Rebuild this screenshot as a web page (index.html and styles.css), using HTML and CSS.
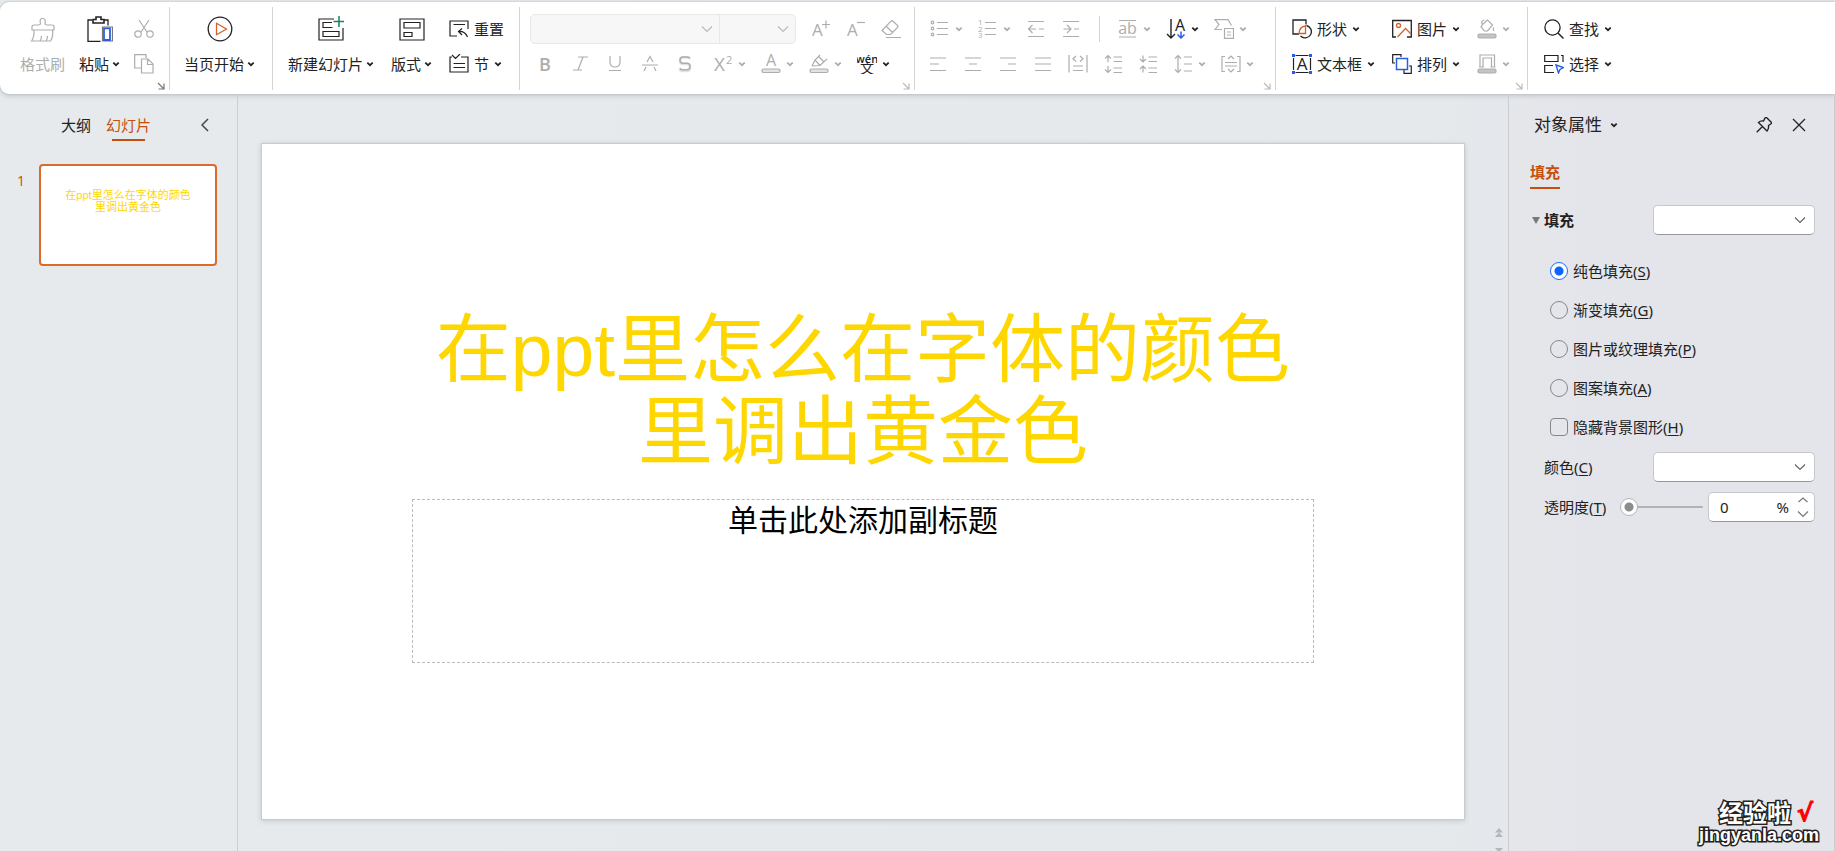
FILE: index.html
```html
<!DOCTYPE html>
<html lang="zh-CN">
<head>
<meta charset="utf-8">
<meta name="viewport" content="width=device-width, initial-scale=1">
<title>演示文稿</title>
<link rel="stylesheet" href="styles.css">
</head>
<body>
<svg class="sprite" aria-hidden="true">
  <symbol id="chev" viewBox="0 0 8 8"><path d="M1.3 2.6 4 5.2 6.7 2.6" stroke-width="1.8"/></symbol>
  <symbol id="launch" viewBox="0 0 8 8"><path d="M1 1 6.5 6.5M1.5 7H7V1.5" stroke-width="1.2"/></symbol>
  <symbol id="brush" viewBox="0 0 26 26"><path d="M2 14V10.500Q2 9 4 9H8.500Q10.500 9 10.500 7.500C8 .5 17 .5 15 7.500Q15 9 17 9H21.500Q24 9 24 10.500V14ZM4 14Q4.500 21 1.500 25H20.500Q23.500 21 22.500 14M10 25Q11.500 23 11.500 20M16 25Q17.500 23 17.500 20"/></symbol>
  <symbol id="paste" viewBox="0 0 26 26"><path d="M5 4H1V25.300H13.500M17 4H21V9.500" stroke-width="1.300"/><path d="M6 7V3.500H9V1H14V3.500H17V7Z" stroke-width="1.600"/><path d="M15.500 11H25.500V25H15.500Z" stroke="#777"/><path d="M17 12.300H23V24H17Z" stroke="#2b5fe3" stroke-width="1.800"/></symbol>
  <symbol id="cut" viewBox="0 0 20 20"><path d="M5 1 13 13M15 1 7 13"/><circle cx="4" cy="15" r="3.200"/><circle cx="16" cy="15" r="3.200"/></symbol>
  <symbol id="copy" viewBox="0 0 20 20"><path d="M7 14H.7V.7H12V4M7.500 5H14L19 10V19H7.500ZM13.500 5V10.500H19"/></symbol>
  <symbol id="play" viewBox="0 0 26 26"><circle cx="13" cy="13" r="11.800" stroke-width="1.300"/><path d="M9.500 7.300 19.500 13 9.500 18.700Z" stroke="#d0622f" stroke-width="1.300"/></symbol>
  <symbol id="newslide" viewBox="0 0 26 26"><path d="M16 3H1V24H25V12M14 6.500H5V11.500H14.500M5 15.500H21V20.500H5Z"/><path d="M21 0V11M15.500 5.500H26.500" stroke="#168461" stroke-width="1.500"/></symbol>
  <symbol id="layout" viewBox="0 0 26 26"><path d="M1 3H25V24H1ZM5 6.500H21V12H5ZM5 16.500H13V20.500H5Z"/></symbol>
  <symbol id="reset" viewBox="0 0 20 20"><path d="M8 17H1V2H19V10M4.500 5.500H16M13 9.500 9.500 12.500 13 16M9.500 12.500Q16 12 18.500 18"/></symbol>
  <symbol id="section" viewBox="0 0 20 20"><path d="M3 3H1V18H19V3H12M3 1 6.500 4.500 11 0M4.500 9.500H16M4.500 13.500H16"/></symbol>
  <symbol id="grow" viewBox="0 0 20 20"><text x="1" y="17" class="g17">A</text><path d="M11 5.500H19M15 1.500V9.500"/></symbol>
  <symbol id="shrink" viewBox="0 0 20 20"><text x="1" y="17" class="g17">A</text><path d="M11 3.500H19"/></symbol>
  <symbol id="eraser" viewBox="0 0 20 20"><path d="M1 11.500 10 2.200Q11 1.300 12 2.200L16.500 6.500Q17.500 7.500 16.500 8.500L9.500 15.500H5.500L1 11.500ZM5.500 7.500 12 14M5 18.500H20"/></symbol>
  <symbol id="bold" viewBox="0 0 20 20"><text x="4" y="17" class="g18 heavy">B</text></symbol>
  <symbol id="italic" viewBox="0 0 20 20"><path d="M8 3H18M3 16H12M13 3 8 16"/></symbol>
  <symbol id="under" viewBox="0 0 20 20"><path d="M5 2V8.500Q5.500 13 10 13 14.500 13 15 8.500V2M4 16.500H16"/></symbol>
  <symbol id="strike" viewBox="0 0 20 20"><path d="M2 11H18M7 8 10 2.500 13 8M4 17 6 13M16 17 14 13"/></symbol>
  <symbol id="shadow" viewBox="0 0 20 20"><path d="M14.500 5Q14 3.500 12 3.500H8Q5 3.500 5 6.500 5 10 8 10H12Q15 10 15 13.500 15 17 12 17H7.500Q5 17 4.500 15" stroke-width="2.500" opacity=".35"/><path d="M15 4.500Q14.500 3 12.500 3H8Q5 3 5 6 5 9.300 8 9.300H12Q15 9.300 15 12.500 15 15.800 12 15.800H7.500Q5.500 15.800 5 14" stroke-width="1.500"/></symbol>
  <symbol id="super" viewBox="0 0 20 20"><text x="1" y="17" class="g19">X</text><text x="13" y="10" class="g11">2</text></symbol>
  <symbol id="fcolor" viewBox="0 0 20 20"><text x="5" y="12" class="g16">A</text><rect x="1" y="15" width="18" height="3.500" rx="1.500" fill="#e2e2e2"/></symbol>
  <symbol id="hilite" viewBox="0 0 20 20"><path d="M3 12 6 6 11 1M3 12 11 11.500 18 5M6 6 11 11.500M10 3 15 8"/><rect x="1" y="15" width="18" height="3.500" rx="1.500" fill="#e2e2e2"/></symbol>
  <symbol id="wen" viewBox="0 0 20 20"><text x="10" y="9" class="g11 mid heavy">wén</text><text x="10" y="19" class="g14 mid">文</text></symbol>
  <symbol id="bullets" viewBox="0 0 20 20"><path d="M7 3.500H18M7 9.500H18M7 15.500H18"/><circle cx="2.500" cy="3.500" r="1.300"/><circle cx="2.500" cy="9.500" r="1.300"/><circle cx="2.500" cy="15.500" r="1.300"/></symbol>
  <symbol id="numbers" viewBox="0 0 20 20"><path d="M7 3.500H18M7 9.500H18M7 15.500H18"/><text x="0" y="6" class="g8">1</text><text x="0" y="12.500" class="g8">2</text><text x="0" y="19" class="g8">3</text></symbol>
  <symbol id="outdent" viewBox="0 0 20 20"><path d="M2 2.500H18M2 17.500H18M2.500 10H10M6.500 6 2.500 10 6.500 14M13 10H18"/></symbol>
  <symbol id="indent" viewBox="0 0 20 20"><path d="M2 2.500H18M2 17.500H18M2.500 10H10M6 6 10 10 6 14M13 10H18"/></symbol>
  <symbol id="ab" viewBox="0 0 20 20"><path d="M1 1.500H18M1 18H18"/><text x="9.500" y="15" class="g16 mid">ab</text></symbol>
  <symbol id="dir" viewBox="0 0 20 20"><path d="M5 0V19M1 15 5 19 9 15" stroke-width="1.400"/><text x="9" y="12" class="g16">A</text><path d="M15 12.500V19M11.500 15.500 15 19 18.500 15.500" stroke="#2b5fe3" stroke-width="1.500"/></symbol>
  <symbol id="smart" viewBox="0 0 20 20"><path d="M8 10.500H1L5 5.500 1 .7H14L17.500 6.500M10.500 9.500H19.500V19.300H10.500ZM13 13H17M13 16H17"/></symbol>
  <symbol id="al" viewBox="0 0 20 20"><path d="M2 4H18M2 10H11M2 16.500H18"/></symbol>
  <symbol id="ac" viewBox="0 0 20 20"><path d="M2 4H18M6 10H14M2 16.500H18"/></symbol>
  <symbol id="ar" viewBox="0 0 20 20"><path d="M2 4H18M10 10H18M2 16.500H18"/></symbol>
  <symbol id="aj" viewBox="0 0 20 20"><path d="M2 4H18M2 10H18M2 16.500H18"/></symbol>
  <symbol id="dist" viewBox="0 0 20 20"><path d="M1 1V18.500M19 1V18.500M5 12H15M5 16.500H15M8 2 5 4.700 8 7.500M12 2 15 4.700 12 7.500"/></symbol>
  <symbol id="spup" viewBox="0 0 20 20"><path d="M5 8V1.500M2 4.500 5 1.500 8 4.500M5 12V18.500M2 15.500 5 18.500 8 15.500M10.500 3H19M10.500 7.500H19M10.500 14H19M10.500 18.500H19"/></symbol>
  <symbol id="spdn" viewBox="0 0 20 20"><path d="M5 8V1.500M2 5 5 8 8 5M5 12V18.500M2 15 5 12 8 15M10.500 3H19M10.500 7.500H19M10.500 14H19M10.500 18.500H19"/></symbol>
  <symbol id="line" viewBox="0 0 20 20"><path d="M5 1.500V18.500M2 4.500 5 1.500 8 4.500M2 15.500 5 18.500 8 15.500M11 3H19M11 10H19M11 17H19"/></symbol>
  <symbol id="valign" viewBox="0 0 20 20"><path d="M4 2.500H1V17.500H4M16 2.500H19V17.500H16M4 8.500H16M4 12H16M7 5 10 2 13 5M7 15 10 18 13 15"/></symbol>
  <symbol id="shapes" viewBox="0 0 20 20"><path d="M7 15H1V1H14V5.500M8.500 17A6.300 6.300 0 1 0 14.500 6.500" stroke-width="1.300"/><path d="M7 14.500Q7.500 7.500 13.500 7V14.500Z" stroke="#d0622f" stroke-width="1.300"/></symbol>
  <symbol id="textbox" viewBox="0 0 20 20"><path d="M3.500 1.500H16.500M3.500 18.500H16.500M1.500 4V16M18.500 4V16"/><text x="10" y="16" class="g17 mid">A</text><path d="M0 0H3V3H0ZM17 0H20V3H17ZM0 17H3V20H0ZM17 17H20V20H17Z" fill="#2b5fe3" stroke="none"/></symbol>
  <symbol id="picture" viewBox="0 0 20 20"><path d="M4 18H.7V1.500H19.300V18H15" stroke-width="1.300"/><circle cx="6.500" cy="6.500" r="2" stroke="#d0622f" stroke-width="1.300"/><path d="M5.500 18 13.500 9.500 19 15" stroke="#d0622f" stroke-width="1.300"/></symbol>
  <symbol id="arrange" viewBox="0 0 20 20"><path d="M3 9H.7V.7H9V3M17 12H19.300V19.300H12V16"/><path d="M4.500 4.500H15.500V15.500H4.500Z" stroke="#2b5fe3" stroke-width="1.500"/></symbol>
  <symbol id="bucket" viewBox="0 0 20 20"><path d="M5.500 5.500 10.500 1 15.500 6 10.500 12H7.500L4 8ZM5 5Q4 1.500 7.500 1M16.500 8.500V12"/><rect x="1" y="15" width="18" height="4" rx="1.500" fill="#c4c4c4"/></symbol>
  <symbol id="outline" viewBox="0 0 20 20"><path d="M3 13V1H17.500V13M6 13V4H14.500V13M2 13H7M13.500 13H18.500"/><rect x="1" y="15" width="18" height="4" rx="1.500" fill="#c4c4c4"/></symbol>
  <symbol id="search" viewBox="0 0 20 20"><circle cx="8.500" cy="8.500" r="7.600" stroke-width="1.300"/><path d="M14 14 19.500 19.500" stroke-width="1.500"/></symbol>
  <symbol id="select" viewBox="0 0 20 20"><path d="M.7 1.500H14V7.500H.7ZM9 11.500H.7V18.500H10M17 1.500H19V8" stroke-width="1.200"/><path d="M12 11 19.500 13.500 16 15.500 14.500 19Z" stroke="#2b5fe3" stroke-width="1.400"/></symbol>
  <symbol id="back" viewBox="0 0 8 14"><path d="M7 1 1 7 7 13" stroke-width="1.500"/></symbol>
  <symbol id="pin" viewBox="0 0 16 16"><path d="M9 1Q10 .2 11 1L15 5Q16 6 15 6.800L12.500 8.500Q13 12 11 14L2.500 5.500Q4.500 3.500 7.500 4ZM6 10 .7 15.300" stroke-width="1.400"/></symbol>
  <symbol id="close" viewBox="0 0 14 14"><path d="M1 1 13 13M13 1 1 13" stroke-width="1.300"/></symbol>
  <symbol id="down" viewBox="0 0 12 8"><path d="M1 1.500 6 6.500 11 1.500" stroke-width="1.200"/></symbol>
  <symbol id="up" viewBox="0 0 12 8"><path d="M1.500 6 6 2 10.500 6" stroke-width="1.200"/></symbol>
</svg>

<header class="ribbon" role="toolbar" aria-label="开始">
  <section class="group group-clip">
    <button class="big off" disabled><svg class="i26"><use href="#brush"/></svg><span>格式刷</span></button>
    <button class="big"><svg class="i26"><use href="#paste"/></svg><span class="cap">粘贴<svg class="chev"><use href="#chev"/></svg></span></button>
    <div class="stack">
      <button class="tool off" disabled aria-label="剪切"><svg class="i20"><use href="#cut"/></svg></button>
      <button class="tool off" disabled aria-label="复制"><svg class="i20"><use href="#copy"/></svg></button>
    </div>
    <button class="launcher" aria-label="剪贴板选项"><svg class="chev"><use href="#launch"/></svg></button>
  </section>
  <section class="group group-play">
    <button class="big"><svg class="i26"><use href="#play"/></svg><span class="cap">当页开始<svg class="chev"><use href="#chev"/></svg></span></button>
  </section>
  <section class="group group-slide">
    <button class="big"><svg class="i26"><use href="#newslide"/></svg><span class="cap">新建幻灯片<svg class="chev"><use href="#chev"/></svg></span></button>
    <button class="big"><svg class="i26"><use href="#layout"/></svg><span class="cap">版式<svg class="chev"><use href="#chev"/></svg></span></button>
    <div class="stack">
      <button class="tool"><svg class="i20"><use href="#reset"/></svg>重置</button>
      <button class="tool"><svg class="i20"><use href="#section"/></svg><span class="cap wide">节<svg class="chev"><use href="#chev"/></svg></span></button>
    </div>
  </section>
  <section class="group group-font">
    <div class="stack">
      <div class="row">
        <div class="combo">
          <span class="pick font-name"><select disabled aria-label="字体"><option></option></select><svg class="arrow"><use href="#down"/></svg></span>
          <span class="pick font-size"><select disabled aria-label="字号"><option></option></select><svg class="arrow"><use href="#down"/></svg></span>
        </div>
        <button class="tool off" disabled aria-label="增大字号"><svg class="i20"><use href="#grow"/></svg></button>
        <button class="tool off" disabled aria-label="减小字号"><svg class="i20"><use href="#shrink"/></svg></button>
        <button class="tool off" disabled aria-label="清除格式"><svg class="i20"><use href="#eraser"/></svg></button>
      </div>
      <div class="row spread">
        <div class="row">
          <button class="tool off" disabled aria-label="加粗"><svg class="i20"><use href="#bold"/></svg></button>
          <button class="tool off" disabled aria-label="倾斜"><svg class="i20"><use href="#italic"/></svg></button>
          <button class="tool off" disabled aria-label="下划线"><svg class="i20"><use href="#under"/></svg></button>
          <button class="tool off" disabled aria-label="删除线"><svg class="i20"><use href="#strike"/></svg></button>
          <button class="tool off" disabled aria-label="阴影"><svg class="i20"><use href="#shadow"/></svg></button>
        </div>
        <div class="row">
          <button class="tool off" disabled aria-label="上标"><svg class="i20"><use href="#super"/></svg><svg class="chev"><use href="#chev"/></svg></button>
          <button class="tool off" disabled aria-label="字体颜色"><svg class="i20"><use href="#fcolor"/></svg><svg class="chev"><use href="#chev"/></svg></button>
          <button class="tool off" disabled aria-label="突出显示"><svg class="i20"><use href="#hilite"/></svg><svg class="chev"><use href="#chev"/></svg></button>
          <button class="tool" aria-label="拼音指南"><svg class="i20"><use href="#wen"/></svg><svg class="chev"><use href="#chev"/></svg></button>
        </div>
      </div>
    </div>
    <button class="launcher off" aria-label="字体选项"><svg class="chev"><use href="#launch"/></svg></button>
  </section>
  <section class="group group-para">
    <div class="stack">
      <div class="row lead">
        <button class="tool off" disabled aria-label="项目符号"><svg class="i20"><use href="#bullets"/></svg><svg class="chev"><use href="#chev"/></svg></button>
        <button class="tool off" disabled aria-label="编号"><svg class="i20"><use href="#numbers"/></svg><svg class="chev"><use href="#chev"/></svg></button>
        <button class="tool off" disabled aria-label="减少缩进"><svg class="i20"><use href="#outdent"/></svg></button>
        <button class="tool off" disabled aria-label="增加缩进"><svg class="i20"><use href="#indent"/></svg></button>
        <i class="rule"></i>
        <button class="tool off" disabled aria-label="字间距"><svg class="i20"><use href="#ab"/></svg><svg class="chev"><use href="#chev"/></svg></button>
        <button class="tool" aria-label="文字方向"><svg class="i20"><use href="#dir"/></svg><svg class="chev"><use href="#chev"/></svg></button>
        <button class="tool off" disabled aria-label="转换图形"><svg class="i20"><use href="#smart"/></svg><svg class="chev"><use href="#chev"/></svg></button>
      </div>
      <div class="row">
        <button class="tool off" disabled aria-label="左对齐"><svg class="i20"><use href="#al"/></svg></button>
        <button class="tool off" disabled aria-label="居中"><svg class="i20"><use href="#ac"/></svg></button>
        <button class="tool off" disabled aria-label="右对齐"><svg class="i20"><use href="#ar"/></svg></button>
        <button class="tool off" disabled aria-label="两端对齐"><svg class="i20"><use href="#aj"/></svg></button>
        <button class="tool off" disabled aria-label="分散对齐"><svg class="i20"><use href="#dist"/></svg></button>
        <button class="tool off" disabled aria-label="增大段距"><svg class="i20"><use href="#spup"/></svg></button>
        <button class="tool off" disabled aria-label="减小段距"><svg class="i20"><use href="#spdn"/></svg></button>
        <button class="tool off" disabled aria-label="行距"><svg class="i20"><use href="#line"/></svg><svg class="chev"><use href="#chev"/></svg></button>
        <button class="tool off" disabled aria-label="对齐文本"><svg class="i20"><use href="#valign"/></svg><svg class="chev"><use href="#chev"/></svg></button>
      </div>
    </div>
    <button class="launcher off" aria-label="段落选项"><svg class="chev"><use href="#launch"/></svg></button>
  </section>
  <section class="group group-draw">
    <div class="draw">
      <button class="tool"><svg class="i20"><use href="#shapes"/></svg><span class="cap wide">形状<svg class="chev"><use href="#chev"/></svg></span></button>
      <button class="tool"><svg class="i20"><use href="#picture"/></svg><span class="cap wide">图片<svg class="chev"><use href="#chev"/></svg></span></button>
      <button class="tool off" disabled aria-label="填充"><svg class="i20"><use href="#bucket"/></svg><svg class="chev"><use href="#chev"/></svg></button>
      <button class="tool"><svg class="i20"><use href="#textbox"/></svg><span class="cap wide">文本框<svg class="chev"><use href="#chev"/></svg></span></button>
      <button class="tool"><svg class="i20"><use href="#arrange"/></svg><span class="cap wide">排列<svg class="chev"><use href="#chev"/></svg></span></button>
      <button class="tool off" disabled aria-label="轮廓"><svg class="i20"><use href="#outline"/></svg><svg class="chev"><use href="#chev"/></svg></button>
    </div>
    <button class="launcher off" aria-label="绘图选项"><svg class="chev"><use href="#launch"/></svg></button>
  </section>
  <section class="group group-find">
    <div class="stack">
      <button class="tool"><svg class="i20"><use href="#search"/></svg><span class="cap wide">查找<svg class="chev"><use href="#chev"/></svg></span></button>
      <button class="tool"><svg class="i20"><use href="#select"/></svg><span class="cap wide">选择<svg class="chev"><use href="#chev"/></svg></span></button>
    </div>
  </section>
</header>

<div class="work">
  <nav class="outline">
    <div class="outline-head">
      <button class="tab">大纲</button>
      <button class="tab active">幻灯片</button>
      <button class="collapse" aria-label="收起"><svg class="back"><use href="#back"/></svg></button>
    </div>
    <div class="thumb-row">
      <span class="thumb-no">1</span>
      <button class="thumb">在ppt里怎么在字体的颜色<br>里调出黄金色</button>
    </div>
  </nav>

  <main class="stage">
    <article class="slide">
      <h1 class="slide-title">在ppt里怎么在字体的颜色<br>里调出黄金色</h1>
      <p class="subtitle">单击此处添加副标题</p>
    </article>
    <div class="pager">
      <svg class="prev" viewBox="0 0 8 10"><path d="M4 0 8 4.500H0ZM4 4.500 8 9H0Z"/></svg>
      <svg class="next" viewBox="0 0 8 3"><path d="M0 0H8L4 4.500Z"/></svg>
    </div>
  </main>

  <aside class="panel">
    <div class="panel-head">
      <h2>对象属性</h2><svg class="chev"><use href="#chev"/></svg>
      <span class="panel-actions">
        <button aria-label="固定"><svg class="i16"><use href="#pin"/></svg></button>
        <button aria-label="关闭"><svg class="i14"><use href="#close"/></svg></button>
      </span>
    </div>
    <button class="panel-tab">填充</button>
    <div class="field fill-field">
      <label for="fill" class="strong"><i class="tri"></i>填充</label>
      <span class="drop"><select id="fill"><option></option></select><svg class="arrow"><use href="#down"/></svg></span>
    </div>
    <div class="options">
      <label><input type="radio" name="fill" checked><span>纯色填充(<u>S</u>)</span></label>
      <label><input type="radio" name="fill"><span>渐变填充(<u>G</u>)</span></label>
      <label><input type="radio" name="fill"><span>图片或纹理填充(<u>P</u>)</span></label>
      <label><input type="radio" name="fill"><span>图案填充(<u>A</u>)</span></label>
      <label><input type="checkbox"><span>隐藏背景图形(<u>H</u>)</span></label>
    </div>
    <div class="field">
      <label for="color">颜色(<u>C</u>)</label>
      <span class="drop"><select id="color"><option></option></select><svg class="arrow"><use href="#down"/></svg></span>
    </div>
    <div class="field">
      <label for="alpha">透明度(<u>T</u>)</label>
      <input class="slider" id="alpha" type="range" min="0" max="100" value="0">
      <span class="spin">
        <input type="text" value="0" aria-label="透明度百分比"><span>%</span>
        <span class="steps">
          <button aria-label="增加"><svg><use href="#up"/></svg></button>
          <button aria-label="减少"><svg><use href="#down"/></svg></button>
        </span>
      </span>
    </div>
    <div class="mark">
      <div class="mark-top"><b>经验啦</b><span class="tick">√</span></div>
      <div class="mark-url">jingyanla.com</div>
    </div>
  </aside>
</div>
</body>
</html>
```
FILE: styles.css
```css
* { box-sizing: border-box; }

body {
  margin: 0;
  min-height: 100vh;
  display: flex;
  flex-direction: column;
  padding-top: 2px;
  background: linear-gradient(90deg, #e6eaec 0%, #e5e9ec 78%, #e4e5ea 86%);
  color: #222;
  font: 15px/20px "Noto Sans", "Noto Sans CJK SC", sans-serif;
  overflow: hidden;
}

button, select, input { font: inherit; color: inherit; }
button { padding: 0; border: 0; background: none; white-space: nowrap; }
h1, h2, p { margin: 0; font-weight: 400; }

svg { display: block; flex: none; fill: none; stroke: currentColor; stroke-width: 1.2; overflow: visible; }
svg text { fill: currentColor; stroke: none; font-family: "Open Sans", "Noto Sans CJK SC", sans-serif; }
.sprite { display: none; }
.i26 { width: 26px; height: 26px; }
.i20 { width: 20px; height: 20px; }
.i16 { width: 16px; height: 16px; }
.i14 { width: 14px; height: 14px; }
.chev { width: 8px; height: 8px; }
.arrow { width: 12px; height: 8px; }
.back { width: 8px; height: 14px; }
.g8 { font-size: 8px; }
.g11 { font-size: 11px; }
.g14 { font-size: 14px; }
.g16 { font-size: 16px; }
.g17 { font-size: 17px; }
.g18 { font-size: 18px; }
.g19 { font-size: 19px; }
.heavy { font-weight: 600; }
.mid { text-anchor: middle; }

/* Ribbon */
.ribbon {
  display: flex;
  padding: 5px 0 4px;
  background: #fff;
  border-radius: 9px 0 0 9px;
  box-shadow: 0 0 2px #aeb5ba, 0 2px 5px #c3c8cc;
}
.group {
  position: relative;
  display: flex;
  padding-top: 4px;
  padding-bottom: 9px;
  border-right: 1px solid #d4d4d4;
}
.group:last-child { border-right: 0; }
.group-clip { gap: 14px; padding-left: 20px; padding-right: 15px; }
.group-play { padding-left: 14px; padding-right: 17px; }
.group-slide { gap: 17px; padding-left: 15px; padding-right: 15px; }
.group-font { padding-left: 10px; padding-right: 13px; }
.group-para { padding-left: 13px; padding-right: 21px; }
.group-draw { padding-left: 16px; padding-right: 17px; }
.group-find { padding-left: 16px; }
.big { display: grid; grid-template-rows: 35px 35px; place-items: center; }
.stack { display: grid; grid-template-rows: 35px 35px; justify-items: start; }
.draw { display: grid; grid-template: 35px 35px / 100px 85px auto; justify-items: start; }
.row { display: flex; align-items: center; gap: 15px; }
.spread { gap: 18px; padding-left: 5px; }
.lead { padding-left: 2px; }
.tool { display: flex; align-items: center; gap: 5px; height: 35px; }
.cap { display: flex; align-items: center; gap: 3px; }
.wide { gap: 5px; }
.off { color: #adadad; }
.launcher { position: absolute; right: 4px; bottom: 0; color: #777; }
.launcher.off { color: #bbb; }
.rule { width: 1px; height: 26px; margin: 0 3px; background: #d4d4d4; }

.combo { display: flex; height: 30px; border: 1px solid #e8e8e8; border-radius: 5px; background: #f7f7f7; color: #bbb; }
.pick, .drop { position: relative; display: block; }
.font-name { width: 189px; border-right: 1px solid #e8e8e8; }
.font-size { width: 75px; }
.pick select, .drop select { appearance: none; width: 100%; height: 100%; border: 0; background: none; padding: 0; }
.pick .arrow, .drop .arrow { position: absolute; right: 6px; top: 10px; pointer-events: none; }

/* Work area */
.work { flex: 1; display: flex; }
.outline { flex: none; width: 238px; border-right: 1px solid #cbcfd2; }
.outline-head { display: flex; align-items: center; gap: 15px; padding: 15px 28px 0 61px; }
.tab { position: relative; height: 32px; }
.tab.active { color: #c4500f; }
.tab.active::after { content: ""; position: absolute; left: 6px; right: 6px; bottom: 0; height: 2px; background: #c4500f; }
.collapse { margin-left: auto; color: #444; }
.thumb-row { display: flex; gap: 16px; padding: 23px 20px 0 17px; }
.thumb-no { width: 6px; padding-top: 7px; color: #c4500f; font: 14px/20px "Open Sans", sans-serif; }
.thumb {
  flex: 1;
  display: block;
  height: 102px;
  padding: 0 0 28px;
  border: 2px solid #d96b2d;
  border-radius: 4px;
  background: #fff;
  color: #ffd700;
  font: 11px/12px "Liberation Sans", "Noto Sans CJK SC", sans-serif;
}

.stage { flex: 1; display: flex; min-width: 0; padding: 49px 5px 0 23px; }
.slide {
  flex: 1;
  align-self: flex-start;
  aspect-ratio: 16 / 9;
  padding-top: 165px;
  border: 1px solid #c9cccf;
  background: #fff;
  box-shadow: 0 1px 5px #c4c8cb;
  text-align: center;
}
.slide-title { color: #ffd700; font: 75px/82px "Liberation Sans", "Noto Sans CJK SC", sans-serif; }
.subtitle {
  width: 75%;
  height: 164px;
  margin: 26px auto 0;
  border: 1px dashed #bbb;
  color: #000;
  font-size: 30px;
  line-height: 39px;
}
.pager { display: flex; flex-direction: column; justify-content: flex-end; gap: 10px; width: 38px; padding-left: 30px; }
.pager svg { width: 8px; fill: #b4b8bb; stroke: none; overflow: hidden; }
.prev { height: 10px; }
.next { height: 3px; }

/* Property panel */
.panel { position: relative; flex: none; width: 327px; padding: 20px 19px 0 21px; border-left: 1px solid #cbcdd1; border-right: 1px solid #cbcdd1; }
.panel-head { display: flex; align-items: center; gap: 8px; padding-left: 4px; }
.panel-head h2 { font-size: 17px; line-height: 22px; }
.panel-actions { display: flex; align-items: center; gap: 20px; margin-left: auto; padding-right: 9px; }
.panel-tab { display: block; height: 31px; margin: 22px 0 16px; padding-bottom: 2px; border-bottom: 2px solid #c4500f; color: #c4500f; font-weight: 700; }
.field { display: flex; align-items: center; height: 30px; margin-bottom: 10px; padding-left: 14px; }
.fill-field { padding-left: 2px; }
.strong { display: flex; align-items: center; gap: 4px; font-weight: 700; }
.tri { border: 4px solid transparent; border-top: 7px solid #777; border-bottom: 0; }
.drop { width: 162px; height: 30px; margin-left: auto; color: #666; }
.drop, .spin { border: 1px solid #c6c8cc; border-bottom-color: #96989c; border-radius: 5px; background: #fff; }
.drop .arrow { right: 8px; }
.options { margin: 16px 0 6px 20px; }
.options label { display: flex; align-items: center; gap: 5px; height: 39px; }
.options input { appearance: none; width: 18px; height: 18px; margin: 0; border: 1px solid #85878b; border-radius: 9px; }
.options input[type="checkbox"] { border-radius: 4px; }
.options input:checked { border-color: #1a6dff; background: radial-gradient(#0a66ff 4px, #fff 5px); }
u { text-underline-offset: 2px; }
.slider { appearance: none; flex: 1; min-width: 0; height: 18px; margin: 0 5px 0 14px; background: linear-gradient(#b0b2b5, #b0b2b5) center / 100% 2px no-repeat; }
.slider::-webkit-slider-thumb { appearance: none; width: 18px; height: 18px; border: 1px solid #b4b6b9; border-radius: 9px; background: radial-gradient(#8c8c8c 4px, #fff 5px); }
.spin { display: flex; align-items: center; width: 107px; height: 30px; padding: 0 5px 0 11px; }
.spin input { flex: 1; width: 20px; padding: 0; border: 0; background: none; }
.steps { display: grid; gap: 6px; margin-left: 8px; color: #777; }
.steps svg { width: 12px; height: 8px; }

.mark { position: absolute; right: 15px; bottom: 6px; color: #fff; text-align: center; -webkit-text-stroke: 3px #222; paint-order: stroke fill; }
.mark-top { display: flex; justify-content: center; gap: 6px; padding-left: 14px; font-size: 24px; line-height: 24px; }
.mark-url { font: bold 18px/20px "Liberation Sans", sans-serif; }
.tick { color: #f00; -webkit-text-stroke: 1px #f00; font: bold 24px/24px "DejaVu Sans", sans-serif; }
```
